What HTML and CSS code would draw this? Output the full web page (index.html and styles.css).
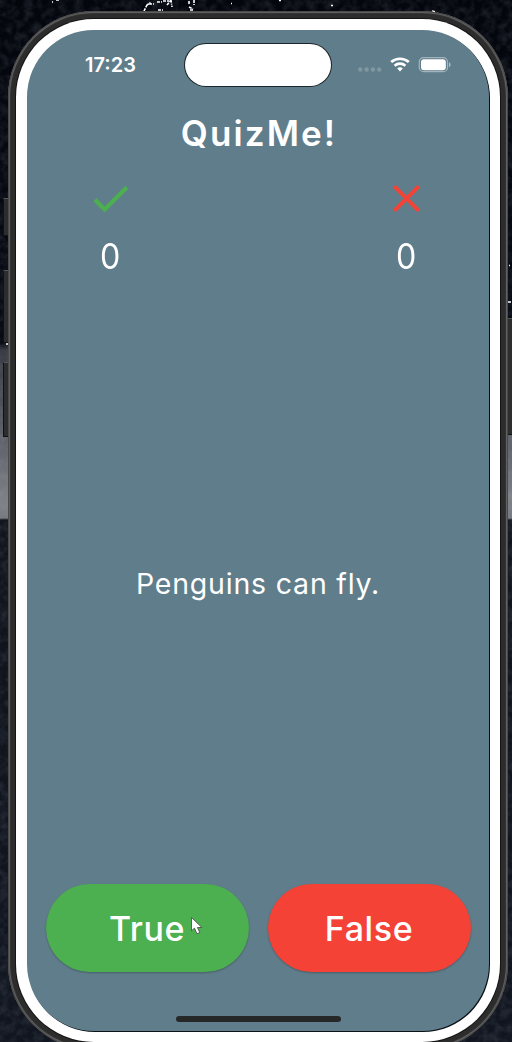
FILE: index.html
```html
<!DOCTYPE html>
<html lang="en">
<head>
<meta charset="utf-8">
<title>QuizMe!</title>
<link rel="stylesheet" href="styles.css">
</head>
<body>
<div class="stage">
  <svg class="texture" width="512" height="1042" aria-hidden="true">
    <filter id="grain" x="0" y="0" width="100%" height="100%">
      <feTurbulence type="fractalNoise" baseFrequency="0.12" numOctaves="3" seed="4"/>
      <feColorMatrix values="0 0 0 0 .45  0 0 0 0 .5  0 0 0 0 .6  .9 0 0 0 -.32"/>
    </filter>
    <rect width="512" height="1042" filter="url(#grain)" opacity=".3"/>
    <path fill="none" stroke="#fff" stroke-width="1.6" stroke-dasharray="3 1 5 1 1 1" d="M144 11l3-6 4-3M149 4h5M157 2h5M158 10h5M167 5l4-5 1 7M163 1h6M189 1v4M194 0v5M189 7l4 2M190 10h4M56 0h3M279 .5h2M331 5.500h2M231 3.500h1M432 11l4 1M52 2h1M509 265.500h1M508 302h3M6 344h2"/>
  </svg>
  <i class="key key-action"></i>
  <i class="key key-up"></i>
  <i class="key key-down"></i>
  <i class="key key-side"></i>
  <div class="frame">
    <div class="bezel">
      <main class="screen">
        <header class="status">
          <span class="time">17:23</span>
          <span class="island"></span>
          <svg class="signals" width="96" height="20" viewBox="0 0 96 20">
            <g fill="#fff" opacity=".2"><circle cx="2.300" cy="14.500" r="2.200"/><circle cx="8.600" cy="14.500" r="2.200"/><circle cx="14.900" cy="14.500" r="2.200"/><circle cx="21.200" cy="14.500" r="2.200"/></g>
            <g fill="none" stroke="#fff" stroke-width="2.700"><path d="M33.200 7.100a13.300 13.300 0 0 1 17.600 0"/><path d="M36.600 10.700a8.200 8.200 0 0 1 10.800 0"/></g>
            <path fill="#fff" d="M39.200 13.400a4.200 4.200 0 0 1 5.600 0L42 16.400z"/>
            <rect x="61.300" y="2.700" width="28.200" height="14" rx="4.300" fill="none" stroke="#fff" stroke-opacity=".42" stroke-width="1.200"/>
            <rect x="63" y="4.300" width="24.800" height="10.900" rx="2.900" fill="#fff"/>
            <path fill="#fff" opacity=".5" d="M91 7.200c2 .8 2 4.200 0 5z"/>
          </svg>
        </header>
        <h1 class="title">QuizMe!</h1>
        <section class="scores">
          <div class="score">
            <svg width="47" height="47" viewBox="0 0 24 24"><path fill="#4caf50" stroke="#4caf50" stroke-width=".25" d="M9 16.170L4.830 12l-1.420 1.410L9 19 21 7l-1.410-1.410z"/></svg>
            <span>0</span>
          </div>
          <div class="score">
            <svg width="47" height="47" viewBox="0 0 24 24"><path fill="#f44336" d="M19 6.410L17.590 5 12 10.590 6.410 5 5 6.410 10.590 12 5 17.590 6.410 19 12 13.410 17.590 19 19 17.590 13.410 12z"/></svg>
            <span>0</span>
          </div>
        </section>
        <p class="question">Penguins can fly.</p>
        <div class="answers">
          <button class="answer answer-true">True</button>
          <button class="answer answer-false">False</button>
        </div>
        <div class="home"></div>
      </main>
    </div>
  </div>
  <svg class="pointer" width="14" height="20" viewBox="0 0 14 20"><path fill="#fff" stroke="#444" stroke-width=".8" d="M1.500 1.500v13.300l3-2.700 2.400 5.600 2.900-1.200-2.400-5h4.500z"/></svg>
</div>
</body>
</html>
```
FILE: styles.css
```css
* { box-sizing: border-box; }
body { margin: 0; font-family: Inter, Roboto, sans-serif; color: #fff; }
.stage {
  position: relative;
  width: 512px;
  height: 1042px;
  overflow: hidden;
  padding: 11px 4px 0 8px;
  background: linear-gradient(#03060d 0, #070a13 300px, #080b12 343px, #3a3d45 350px, #50535b 410px, #62656d 450px, #7d8085 500px, #777a80 518px, #10141d 520px, #10151f 1042px);
}
.texture { position: absolute; left: 0; top: 0; }
.key {
  position: absolute;
  left: 3px;
  width: 7px;
  background: #2d2d2d;
  border: 1px solid #111;
  border-top-color: #555;
}
.key-action { top: 198px; height: 38px; }
.key-up { top: 270px; height: 73px; }
.key-down { top: 362px; height: 75px; }
.key-side { left: 506px; top: 318px; height: 117px; }
.frame {
  position: relative;
  width: 500px;
  height: 1039px;
  padding: 8px;
  border-radius: 86px;
  background: #2c2c2c;
  box-shadow: inset 0 0 0 1px #4a4a4a, inset 0 0 0 2px #606060, inset 0 0 0 3px #333;
}
.bezel {
  height: 1023px;
  padding: 11px;
  border-radius: 78px;
  background: #fff;
  box-shadow: 0 0 0 1px #151515;
}
.screen {
  display: flex;
  flex-direction: column;
  align-items: center;
  width: 462px;
  height: 1001px;
  border-radius: 67px;
  background: #607d8b;
  box-shadow: 1px 1px 0 #0b1215;
}
.status {
  display: grid;
  grid-template-columns: 158px 146px 1fr;
  width: 100%;
  height: 69px;
  padding-top: 14px;
}
.time { padding-left: 58px; font-size: 20px; font-weight: 600; line-height: 42px; }
.island { height: 42px; border-radius: 21px; background: #fff; box-shadow: 0 0 0 1px #1c2529; }
.signals { margin: 11px 0 0 27px; }
.title { margin: 10px 0 0; font-size: 35px; line-height: 48px; font-weight: 600; letter-spacing: 2.1px; text-indent: 2px; }
.scores { display: flex; justify-content: space-between; width: 343px; margin-top: 18px; }
.score { display: flex; flex-direction: column; align-items: center; width: 47px; }
.score svg { display: block; }
.score span { margin-top: 11px; font-size: 35px; line-height: 46px; font-weight: 400; transform: scaleX(.92); }
.question { margin: 285px 0 0; font-size: 28.5px; line-height: 40px; letter-spacing: .8px; }
.answers { display: grid; grid-template-columns: 203px 203px; gap: 19px; margin-top: 280px; }
.answer {
  height: 88px;
  padding: 2px 0 0;
  border: 0;
  border-radius: 44px;
  font: 500 34px/86px Inter, Roboto, sans-serif;
  letter-spacing: .6px;
  color: #fff;
  box-shadow: 0 1px 2px rgba(0, 0, 0, .25);
}
.answer-true { background: #4caf50; }
.answer-false { background: #f44336; }
.home { width: 165px; height: 6px; margin-top: 44px; border-radius: 3px; background: #262828; }
.pointer { position: absolute; left: 190px; top: 916px; }
```
